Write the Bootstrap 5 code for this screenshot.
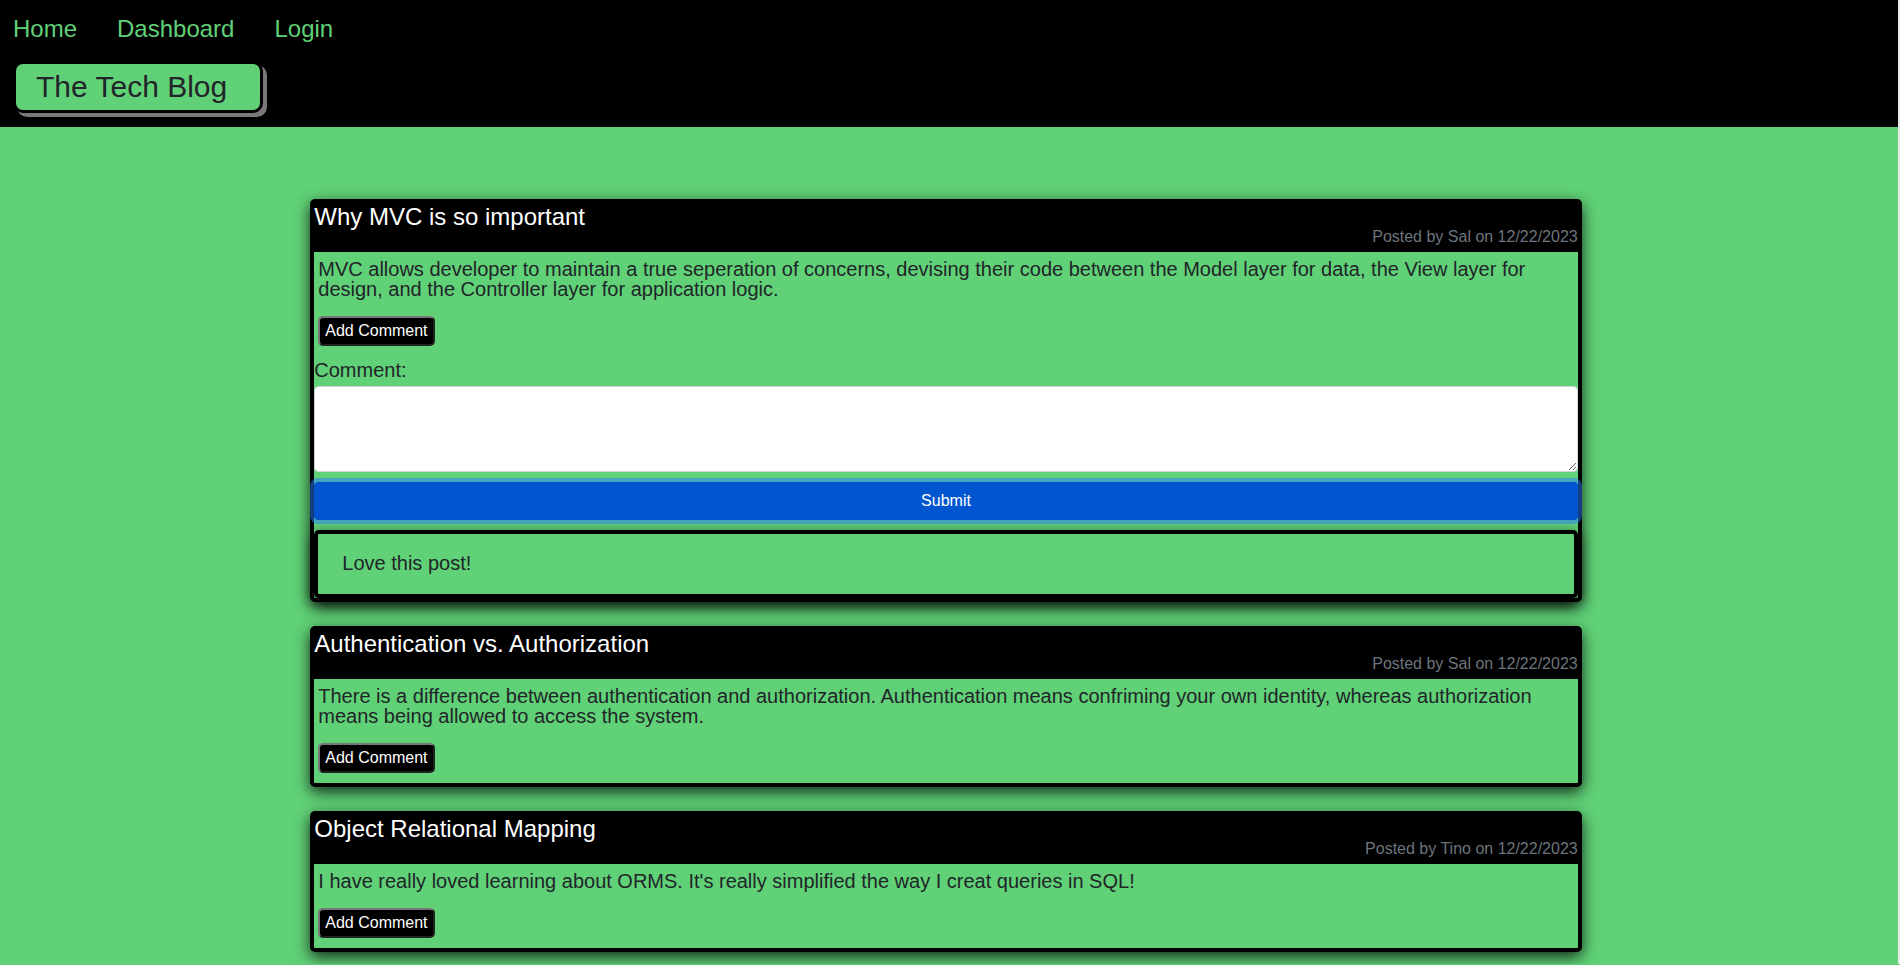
<!DOCTYPE html>
<html lang="en">
<head>
<meta charset="utf-8">
<meta name="viewport" content="width=device-width, initial-scale=1">
<title>The Tech Blog</title>
<link href="https://cdn.jsdelivr.net/npm/bootstrap@5.3.0/dist/css/bootstrap.min.css" rel="stylesheet">
<style>
  :root { --leaf: #60d177; }
  body {
    background: var(--leaf);
    color: #212529;
    font-family: "Liberation Sans", Arial, sans-serif;
    font-size: 20px;
    line-height: 20px;
    border-right: 2px solid #e8e8e8;
  }
  .site-header { background: #000; padding: 11px 13px 14px; }
  .site-nav { gap: 40px; font-size: 24px; line-height: 36px; }
  .site-nav a { color: var(--leaf); }
  .site-title {
    display: table;
    margin: 14px 0 0;
    padding: 0 33px 0 20px;
    background: var(--leaf);
    border: 3px solid #000;
    border-radius: 10px;
    box-shadow: 4px 4px 0 #7b777b;
    font-size: 30px;
    font-weight: 400;
    line-height: 46px;
  }
  .feed { padding: 72px 6px 12px 0; }
  .feed-column { width: 67.2%; gap: 24px; }
  .framed {
    background: var(--leaf);
    border: 4px solid #000;
    border-radius: 5px;
    box-shadow: 0 5px 15px rgba(0, 0, 0, .8);
  }
  .post-head { background: #000; padding: 2px 0 7px; }
  .post-head h2 { color: #fff; font-size: 24px; font-weight: 400; line-height: 24px; }
  .post-meta { color: #6c757d; font-size: 16px; line-height: 16px; }
  .post-text { padding: 7px 4px 0; margin-bottom: 17px; }
  .btn-comment {
    display: block;
    margin: 0 4px 10px;
    padding: 0 5px;
    height: 30px;
    background: #000;
    color: #fff;
    border: 2px outset #767676;
    border-radius: 5px;
    font-size: 16px;
    line-height: 24px;
  }
  .comment-label { line-height: 28px; margin-bottom: 2px; }
  .comment-input { height: 86px; border-color: #ced4da; border-radius: 4px; }
  .btn-send, .btn-send:hover {
    height: 38px;
    margin: 10px 0;
    background: #0056d0;
    border-color: #0052c6;
    color: #fff;
    border-radius: 4px;
    font-size: 16px;
    box-shadow: 0 0 0 4px rgba(38, 123, 255, .5);
  }
  .reply { padding: 19px 24px 21px; }
</style>
</head>
<body>
<header class="site-header">
  <nav class="site-nav d-flex" aria-label="Main">
    <a class="text-decoration-none" href="#">Home</a>
    <a class="text-decoration-none" href="#">Dashboard</a>
    <a class="text-decoration-none" href="#">Login</a>
  </nav>
  <h1 class="site-title">The Tech Blog</h1>
</header>

<main class="feed">
  <div class="feed-column d-flex flex-column mx-auto">
    <article class="framed">
      <div class="post-head">
        <h2 class="m-0">Why MVC is so important</h2>
        <div class="post-meta text-end">Posted by Sal on 12/22/2023</div>
      </div>
      <p class="post-text">MVC allows developer to maintain a true seperation of concerns, devising their code between the Model layer for data, the View layer for design, and the Controller layer for application logic.</p>
      <button type="button" class="btn-comment">Add Comment</button>
      <form>
        <label class="comment-label d-block" for="comment">Comment:</label>
        <textarea class="comment-input form-control" id="comment"></textarea>
        <button type="button" class="btn btn-send w-100">Submit</button>
      </form>
      <div class="framed reply">Love this post!</div>
    </article>

    <article class="framed">
      <div class="post-head">
        <h2 class="m-0">Authentication vs. Authorization</h2>
        <div class="post-meta text-end">Posted by Sal on 12/22/2023</div>
      </div>
      <p class="post-text">There is a difference between authentication and authorization. Authentication means confriming your own identity, whereas authorization means being allowed to access the system.</p>
      <button type="button" class="btn-comment">Add Comment</button>
    </article>

    <article class="framed">
      <div class="post-head">
        <h2 class="m-0">Object Relational Mapping</h2>
        <div class="post-meta text-end">Posted by Tino on 12/22/2023</div>
      </div>
      <p class="post-text">I have really loved learning about ORMS. It's really simplified the way I creat queries in SQL!</p>
      <button type="button" class="btn-comment">Add Comment</button>
    </article>
  </div>
</main>
<script src="https://cdn.jsdelivr.net/npm/bootstrap@5.3.0/dist/js/bootstrap.bundle.min.js"></script>
</body>
</html>
